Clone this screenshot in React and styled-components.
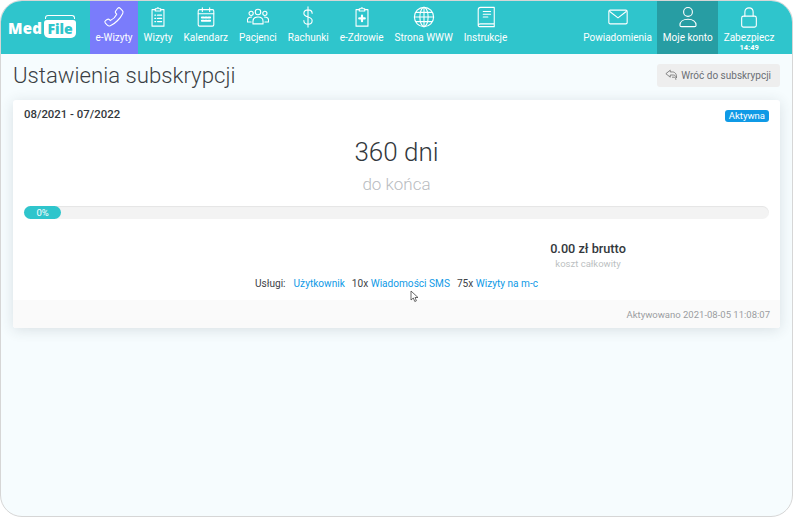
import React from "react";
import styled, { createGlobalStyle } from "styled-components";

const GlobalStyle = createGlobalStyle`
  html, body {
    margin: 0;
    padding: 0;
    background: #fff;
    font-family: Roboto, "Liberation Sans", sans-serif;
  }
`;

const Page = styled.div`
  box-sizing: border-box;
  width: 793px;
  height: 517px;
  background: #f6fcfe;
  border: 1px solid #d6d6d6;
  border-radius: 22px;
  overflow: hidden;
  position: relative;
`;

const Header = styled.header`
  display: flex;
  height: 53px;
  background: #2fc5cc;
`;

const Logo = styled.div`
  width: 89px;
  flex: none;
  display: flex;
  align-items: center;
  padding: 1px 0 0 7px;
  box-sizing: border-box;
`;

const LogoMed = styled.span`
  color: #fff;
  font: 900 15px "Open Sans", Roboto, sans-serif;
  letter-spacing: 0.2px;
`;

const LogoFolder = styled.div`
  position: relative;
  margin-left: 2px;
  margin-top: 1px;
  width: 32px;
  height: 18px;
  background: #fff;
  border-radius: 3px 3px 5px 5px;
  text-align: center;
  color: #2fc5cc;
  font: 900 14px/18px "Open Sans", Roboto, sans-serif;

  &::before {
    content: "";
    position: absolute;
    left: 1px;
    top: -5px;
    width: 28px;
    height: 3px;
    border: 1px solid #fff;
    border-bottom: 0;
    border-radius: 3px 3px 0 0;
  }
`;

const Nav = styled.nav`
  display: flex;
  flex: 1;
  margin-right: 12px;
`;

const NavItem = styled.div`
  display: flex;
  flex-direction: column;
  align-items: center;
  padding: 5px 5.5px 0;
  color: #fff;
  font-size: 10px;
  line-height: 13px;
  white-space: nowrap;
  background: ${(p) => p.$bg || "transparent"};

  svg {
    width: 22px;
    height: 22px;
    margin-bottom: 3px;
    fill: none;
    stroke: #fff;
    stroke-width: 1.2;
    stroke-linecap: round;
    stroke-linejoin: round;
    display: block;
  }
`;

const Time = styled.span`
  font-size: 7.5px;
  font-weight: 700;
  line-height: 9px;
  margin-top: -1px;
`;

const Spacer = styled.div`
  flex: 1;
`;

const Content = styled.main`
  padding: 9px 12px 0;
`;

const TitleRow = styled.div`
  display: flex;
  justify-content: space-between;
  align-items: center;
  height: 24px;
  margin-bottom: 13px;
`;

const Title = styled.h1`
  margin: 0;
  font-size: 22.2px;
  font-weight: 300;
  color: #3a3f44;
`;

const BackButton = styled.div`
  display: flex;
  align-items: center;
  gap: 2px;
  height: 23px;
  padding: 0 9px 0 8px;
  background: #eeeeee;
  border-radius: 3px;
  color: #6b6f75;
  font-size: 10px;

  svg {
    width: 14px;
    height: 14px;
    fill: none;
    stroke: #777;
    stroke-width: 1;
  }
`;

const Card = styled.section`
  background: #fff;
  border-radius: 3px;
  box-shadow: 0 2px 14px rgba(40, 60, 70, 0.14);
`;

const CardBody = styled.div`
  height: 200px;
  padding: 7px 11px 0;
  box-sizing: border-box;
`;

const CardTop = styled.div`
  display: flex;
  justify-content: space-between;
  height: 14px;
`;

const Period = styled.div`
  font-size: 11.4px;
  font-weight: 500;
  line-height: 14px;
  color: #33383d;
`;

const Badge = styled.span`
  margin-top: 3px;
  height: 12px;
  padding: 0 4px;
  background: #0f9ae6;
  border-radius: 3px;
  color: #fff;
  font-size: 9.5px;
  font-weight: 400;
  line-height: 12px;
`;

const Days = styled.div`
  margin-top: 15px;
  text-align: center;
  font-size: 26px;
  font-weight: 300;
  line-height: 32px;
  color: #33383d;
`;

const Remaining = styled.div`
  margin-top: 7px;
  text-align: center;
  font-size: 17px;
  font-weight: 300;
  line-height: 19px;
  color: #b9bcbf;
`;

const Track = styled.div`
  margin-top: 12px;
  height: 13px;
  background: #f3f3f3;
  border-radius: 7px;
  box-shadow: inset 0 1px 1px rgba(0, 0, 0, 0.06);
`;

const Fill = styled.div`
  height: 100%;
  background: #2fc5cc;
  border-radius: 7px;
  color: #fff;
  font-size: 9.5px;
  line-height: 13px;
  text-align: center;
`;

const Price = styled.div`
  display: flex;
  flex-direction: column;
  align-items: center;
  width: 362px;
  margin: 22px 0 0 auto;
`;

const Amount = styled.div`
  font-size: 12.7px;
  font-weight: 500;
  line-height: 15px;
  color: #33383d;
`;

const AmountLabel = styled.div`
  font-size: 9.5px;
  line-height: 15px;
  color: #bcbfc2;
`;

const Services = styled.div`
  display: flex;
  justify-content: center;
  margin-top: 6px;
  font-size: 10.1px;
  line-height: 14px;
  color: #3d4247;
  white-space: pre;
`;

const Service = styled.span`
  margin-left: ${(p) => p.$gap || 7}px;
`;

const ServiceLink = styled.span`
  color: #0f9ae6;
`;

const CardFooter = styled.div`
  display: flex;
  justify-content: flex-end;
  align-items: center;
  height: 28px;
  padding: 0 10px;
  background: #fafafa;
  border-radius: 0 0 3px 3px;
  font-size: 9.5px;
  color: #9a9da1;
`;

const Cursor = styled.svg`
  position: absolute;
  left: 409px;
  top: 289px;
  width: 10px;
  height: 13px;
`;

const PhoneIcon = () => (
  <svg viewBox="0 0 24 24">
    <path d="M16 2.500c1-.9 2-.8 2.800 0l2.400 2.600c.8.9.9 1.900.3 3C19 13.500 13 19.500 8 21.500c-1.200.5-2.200.4-3-.4l-2.400-2.400c-.8-.9-.8-1.900.1-2.700l1.800-1.300c.9-.6 1.800-.5 2.500.2l1 1c3-1.400 5.500-4 7-7l-1-1c-.7-.7-.8-1.700-.1-2.500z" />
  </svg>
);

const ClipboardIcon = () => (
  <svg viewBox="0 0 24 24">
    <path d="M9 4H5.500v18h13V4H15" />
    <path d="M9 5.500V3h2c0-1.500 2-1.500 2 0h2v2.500z" />
    <path d="M8.500 10h1M11.500 10h4.500M8.500 13.500h1M11.500 13.500h4.500M8.500 17h1M11.500 17h4.500" />
  </svg>
);

const CalendarIcon = () => (
  <svg viewBox="0 0 24 24">
    <rect x="3.500" y="4" width="17" height="18" rx="1.500" />
    <path d="M3.500 8.500h17M8 2v4M16 2v4" />
    <path
      style={{ strokeWidth: 2.2 }}
      d="M7.500 12.500h2M11 12.500h2M14.500 12.500h2M7.500 16h2M11 16h2M14.500 16h2"
    />
  </svg>
);

const PeopleIcon = () => (
  <svg viewBox="0 0 24 24">
    <circle cx="12" cy="6.500" r="3" />
    <circle cx="4.500" cy="8" r="2.300" />
    <circle cx="19.500" cy="8" r="2.300" />
    <path d="M6.500 19.500v-3c0-3 2.500-4.500 5.500-4.500s5.500 1.500 5.500 4.500v3z" />
    <path d="M5 12c-2.500 0-4.500 1.200-4.500 3.500v2h4M19 12c2.500 0 4.500 1.200 4.500 3.500v2h-4" />
  </svg>
);

const DollarIcon = () => (
  <svg viewBox="0 0 24 24">
    <path d="M16.500 8c0-2.500-1.800-3.800-4.500-3.800S7.500 5.500 7.500 8s1.800 3.300 4.500 4 4.500 1.500 4.500 4-1.800 3.800-4.500 3.800-4.500-1.300-4.500-3.800M12 1v22" />
  </svg>
);

const HealthIcon = () => (
  <svg viewBox="0 0 24 24">
    <path d="M9 4H5.500v18h13V4H15" />
    <path d="M9 5.500V3h2c0-1.500 2-1.500 2 0h2v2.500z" />
    <path style={{ strokeWidth: 2.4 }} d="M12 10.500v6M9 13.500h6" />
  </svg>
);

const GlobeIcon = () => (
  <svg viewBox="0 0 24 24">
    <circle cx="12" cy="12" r="10.500" />
    <ellipse cx="12" cy="12" rx="4.500" ry="10.500" />
    <path d="M12 1.500v21M1.500 12h21M3.500 7h17M3.500 17h17" />
  </svg>
);

const BookIcon = () => (
  <svg viewBox="0 0 24 24">
    <path d="M6 1.500h15v18H6c-1.500 0-2.500.8-2.500 1.400S4.500 22.500 6 22.500h15v-3M3.500 21V4C3.500 2.500 4.500 1.500 6 1.500" />
    <path d="M9 6h8M9 9h8M9 12h5" />
  </svg>
);

const MailIcon = () => (
  <svg viewBox="0 0 24 24">
    <rect x="2" y="4.500" width="20" height="15" rx="1.500" />
    <path d="M3 6l9 7 9-7" />
  </svg>
);

const UserIcon = () => (
  <svg viewBox="0 0 24 24">
    <circle cx="12" cy="6.500" r="4.800" />
    <path d="M5 22.500c-1 0-1.800-.6-1.800-1.600 0-3.900 3.500-6.400 8.800-6.400s8.800 2.500 8.800 6.400c0 1-.8 1.600-1.800 1.600z" />
  </svg>
);

const LockIcon = () => (
  <svg viewBox="0 0 24 24">
    <rect x="4" y="11" width="16" height="12" rx="2" />
    <path d="M7.500 11V6.500C7.500 3.500 9.500 2 12 2s4.500 1.500 4.500 4.500V11" />
  </svg>
);

const BackIcon = () => (
  <svg viewBox="0 0 16 16">
    <path d="M6 2.500 1 6.500l5 4V8h3.500c1.500 0 3 1 3.500 3.500.8-3.500-1-7-4.500-7H6z" />
    <path d="M8 10.500h2.500c1 0 1.500.8 2 3" />
  </svg>
);

const mainNav = [
  { label: "e-Wizyty", icon: <PhoneIcon />, bg: "#7a7cfb" },
  { label: "Wizyty", icon: <ClipboardIcon /> },
  { label: "Kalendarz", icon: <CalendarIcon /> },
  { label: "Pacjenci", icon: <PeopleIcon /> },
  { label: "Rachunki", icon: <DollarIcon /> },
  { label: "e-Zdrowie", icon: <HealthIcon /> },
  { label: "Strona WWW", icon: <GlobeIcon /> },
  { label: "Instrukcje", icon: <BookIcon /> },
];

const App = () => {
  return (
    <Page>
      <GlobalStyle />
      <Header>
        <Logo>
          <LogoMed>Med</LogoMed>
          <LogoFolder>File</LogoFolder>
        </Logo>
        <Nav>
          {mainNav.map((item) => (
            <NavItem key={item.label} $bg={item.bg}>
              {item.icon}
              {item.label}
            </NavItem>
          ))}
          <Spacer />
          <NavItem>
            <MailIcon />
            Powiadomienia
          </NavItem>
          <NavItem $bg="#279da3">
            <UserIcon />
            Moje konto
          </NavItem>
          <NavItem>
            <LockIcon />
            Zabezpiecz
            <Time>14:49</Time>
          </NavItem>
        </Nav>
      </Header>
      <Content>
        <TitleRow>
          <Title>Ustawienia subskrypcji</Title>
          <BackButton>
            <BackIcon />
            Wróć do subskrypcji
          </BackButton>
        </TitleRow>
        <Card>
          <CardBody>
            <CardTop>
              <Period>08/2021 - 07/2022</Period>
              <Badge>Aktywna</Badge>
            </CardTop>
            <Days>360 dni</Days>
            <Remaining>do końca</Remaining>
            <Track>
              <Fill style={{ width: "5%" }}>0%</Fill>
            </Track>
            <Price>
              <Amount>0.00 zł brutto</Amount>
              <AmountLabel>koszt całkowity</AmountLabel>
            </Price>
            <Services>
              <span>Usługi:</span>
              <Service $gap={8}>
                <ServiceLink>Użytkownik</ServiceLink>
              </Service>
              <Service>
                10x <ServiceLink>Wiadomości SMS</ServiceLink>
              </Service>
              <Service>
                75x <ServiceLink>Wizyty na m-c</ServiceLink>
              </Service>
            </Services>
          </CardBody>
          <CardFooter>Aktywowano 2021-08-05 11:08:07</CardFooter>
        </Card>
      </Content>
      <Cursor viewBox="0 0 10 13">
        <path
          d="M1 1v9l2.300-2 1.500 3.500 1.600-.7L5 7.500h3z"
          fill="#fff"
          stroke="#444"
          strokeWidth="0.8"
        />
      </Cursor>
    </Page>
  );
};

export default App;
